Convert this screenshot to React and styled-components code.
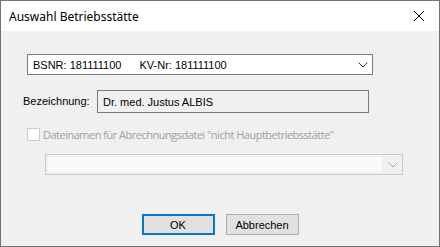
import React from "react";
import styled, { createGlobalStyle } from "styled-components";

const GlobalStyle = createGlobalStyle`
  html, body {
    margin: 0;
    padding: 0;
    background: #f0f0f0;
  }
  * {
    box-sizing: border-box;
  }
`;

const Window = styled.div`
  display: flex;
  flex-direction: column;
  width: 440px;
  height: 247px;
  border: 1px solid #717171;
  background: #f0f0f0;
  font-family: "Liberation Sans", Arial, sans-serif;
  font-size: 11px;
  color: #000;
`;

const TitleBar = styled.div`
  display: flex;
  align-items: center;
  justify-content: space-between;
  height: 30px;
  padding: 0 10px 0 8px;
  background: #fff;
`;

const Title = styled.span`
  font-family: "Noto Sans", sans-serif;
  font-size: 12px;
  color: #000;
`;

const CloseButton = styled.span`
  display: flex;
  width: 10px;
  height: 10px;
  margin-right: 5px;
`;

const Body = styled.div`
  display: flex;
  flex-direction: column;
  flex: 1;
  padding: 23px 0 0 26px;
`;

const Select = styled.div`
  display: flex;
  align-items: center;
  justify-content: space-between;
  width: 346px;
  height: 21px;
  padding: 0 4px 0 5px;
  border: 1px solid #7a7a7a;
  background: #fff;
`;

const SelectText = styled.span`
  display: flex;
  gap: 18px;
  white-space: nowrap;
`;

const FieldRow = styled.div`
  display: flex;
  align-items: center;
  margin-top: 15px;
`;

const FieldLabel = styled.span`
  width: 74px;
  margin-left: -4px;
  padding-bottom: 2px;
`;

const ReadonlyBox = styled.div`
  display: flex;
  align-items: center;
  width: 272px;
  height: 23px;
  padding-left: 5px;
  border: 1px solid #7a7a7a;
  background: #f0f0f0;
`;

const CheckRow = styled.div`
  display: flex;
  align-items: center;
  gap: 3px;
  margin-top: 14px;
`;

const CheckBox = styled.span`
  width: 13px;
  height: 13px;
  border: 1px solid #cccccc;
  background: #fff;
`;

const CheckLabel = styled.span`
  font-family: "Open Sans", sans-serif;
  font-size: 11px;
  letter-spacing: -0.5px;
  color: #a0a0a0;
  white-space: nowrap;
`;

const DisabledSelect = styled.div`
  display: flex;
  align-items: center;
  justify-content: space-between;
  width: 358px;
  height: 21px;
  margin: 12px 0 0 18px;
  padding: 2px 4px 2px 2px;
  border: 1px solid #cccccc;
  background: #f0f0f0;
`;

const DisabledField = styled.span`
  width: 334px;
  height: 100%;
  background: #fafafa;
`;

const ButtonRow = styled.div`
  display: flex;
  justify-content: center;
  gap: 11px;
  margin: 39px 0 0 -26px;
`;

const Button = styled.button`
  width: 73px;
  height: 21px;
  padding: 0;
  border: ${({ $primary }) => ($primary ? "2px solid #0078d7" : "1px solid #adadad")};
  background: #e1e1e1;
  font-family: "Liberation Sans", Arial, sans-serif;
  font-size: 11px;
  color: #000;
`;

const Chevron = ({ color }) => (
  <svg width="10" height="6" viewBox="0 0 10 6">
    <path d="M0.5 0.5 L5 5 L9.5 0.5" fill="none" stroke={color} strokeWidth="1" />
  </svg>
);

export default function App() {
  return (
    <>
      <GlobalStyle />
      <Window>
        <TitleBar>
          <Title>Auswahl Betriebsstätte</Title>
          <CloseButton>
            <svg width="10" height="10" viewBox="0 0 10 10">
              <path d="M0 0 L10 10 M10 0 L0 10" stroke="#000" strokeWidth="1" />
            </svg>
          </CloseButton>
        </TitleBar>
        <Body>
          <Select>
            <SelectText>
              <span>BSNR: 181111100</span>
              <span>KV-Nr: 181111100</span>
            </SelectText>
            <Chevron color="#333" />
          </Select>
          <FieldRow>
            <FieldLabel>Bezeichnung:</FieldLabel>
            <ReadonlyBox>Dr. med. Justus ALBIS</ReadonlyBox>
          </FieldRow>
          <CheckRow>
            <CheckBox />
            <CheckLabel>Dateinamen für Abrechnungsdatei "nicht Hauptbetriebsstätte"</CheckLabel>
          </CheckRow>
          <DisabledSelect>
            <DisabledField />
            <Chevron color="#a8a8a8" />
          </DisabledSelect>
          <ButtonRow>
            <Button $primary>OK</Button>
            <Button>Abbrechen</Button>
          </ButtonRow>
        </Body>
      </Window>
    </>
  );
}
